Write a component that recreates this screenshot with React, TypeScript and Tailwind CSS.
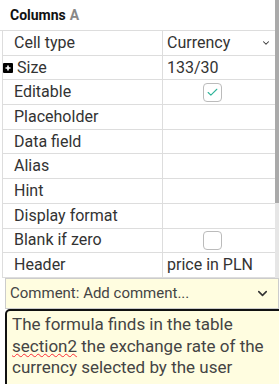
import React from 'react';
import { ChevronDown, Check } from 'lucide-react';

const ROWS: { label: string; value?: string; kind?: 'select' | 'check' | 'box' }[] = [
  { label: 'Cell type', value: 'Currency', kind: 'select' },
  { label: 'Size', value: '133/30' },
  { label: 'Editable', kind: 'check' },
  { label: 'Placeholder' },
  { label: 'Data field' },
  { label: 'Alias' },
  { label: 'Hint' },
  { label: 'Display format' },
  { label: 'Blank if zero', kind: 'box' },
  { label: 'Header', value: 'price in PLN' },
];

const App: React.FC = () => {
  return (
    <div className="w-[279px] h-[384px] overflow-hidden bg-white text-[#333]" style={{ fontFamily: 'Roboto, "Liberation Sans", sans-serif' }}>
      <div className="flex h-[278px]">
        <div className="flex-1 flex flex-col">
          {/* Header */}
          <div className="h-[31px] flex items-center pl-[10px] border-b border-[#ddd]">
            <span className="text-[14px] font-bold text-[#111]">Columns</span>
            <span className="text-[14px] font-bold text-[#888] ml-[4px]">A</span>
          </div>
          <div className="border-l border-[#ddd] ml-[2px]">
            {ROWS.map((row, idx) => (
              <div key={idx} className="h-[24.7px] flex border-b border-[#ddd] text-[16px] leading-none">
                <div className="w-[160px] relative flex items-center pl-[11px] border-r border-[#ddd]">
                  {row.label === 'Size' && (
                    <span className="absolute left-[0px] w-[10px] h-[10px] bg-black rounded-[1px] flex items-center justify-center">
                      <svg width="8" height="8" viewBox="0 0 8 8">
                        <path d="M4 1.5v5M1.5 4h5" stroke="white" strokeWidth="1.6" />
                      </svg>
                    </span>
                  )}
                  <span className={row.label === 'Size' ? 'text-[#333] ml-[3px]' : 'text-[#333]'}>{row.label}</span>
                </div>
                <div className="flex-1 flex items-center pl-[4px] pr-[4px]">
                  {row.kind === 'select' && (
                    <div className="flex-1 flex items-center justify-between">
                      <span>{row.value}</span>
                      <ChevronDown className="w-[10px] h-[10px] text-[#333]" strokeWidth={2.5} />
                    </div>
                  )}
                  {row.kind === 'check' && (
                    <div className="flex-1 flex justify-center pr-[14px]">
                      <div className="w-[19px] h-[19px] rounded-[4px] border border-[#bbb] flex items-center justify-center">
                        <Check className="w-[13px] h-[13px] text-[#2fb49a]" strokeWidth={2} />
                      </div>
                    </div>
                  )}
                  {row.kind === 'box' && (
                    <div className="flex-1 flex justify-center pr-[14px]">
                      <div className="w-[19px] h-[19px] rounded-[4px] border border-[#bbb]" />
                    </div>
                  )}
                  {!row.kind && row.value && <span>{row.value}</span>}
                </div>
              </div>
            ))}
          </div>
        </div>
        {/* Scrollbar */}
        <div className="w-[4px] bg-[#e6e6e6] flex flex-col">
          <div className="h-[203px] bg-[#aaa]" />
        </div>
      </div>

      {/* Comment bar */}
      <div className="h-[31px] ml-[5px] flex items-center justify-between pl-[4px] pr-[8px] bg-[#fffde0] border border-[#ccc] text-[15px] text-[#444]">
        <span>Comment: Add comment...</span>
        <ChevronDown className="w-[15px] h-[15px] text-[#333]" strokeWidth={2.5} />
      </div>

      {/* Comment text */}
      <div className="ml-[5px] w-[290px] h-[80px] bg-[#fffde0] border-2 border-[#111] rounded-tl-[5px] pl-[5px] pt-[3px] text-[17px] leading-[21.5px] text-[#444]">
        <div className="w-[262px]">
          The formula finds in the table{' '}
          <span className="underline decoration-wavy decoration-red-500 decoration-1">section2</span> the exchange rate of the currency selected by the user
        </div>
      </div>
    </div>
  );
};

export default App;
